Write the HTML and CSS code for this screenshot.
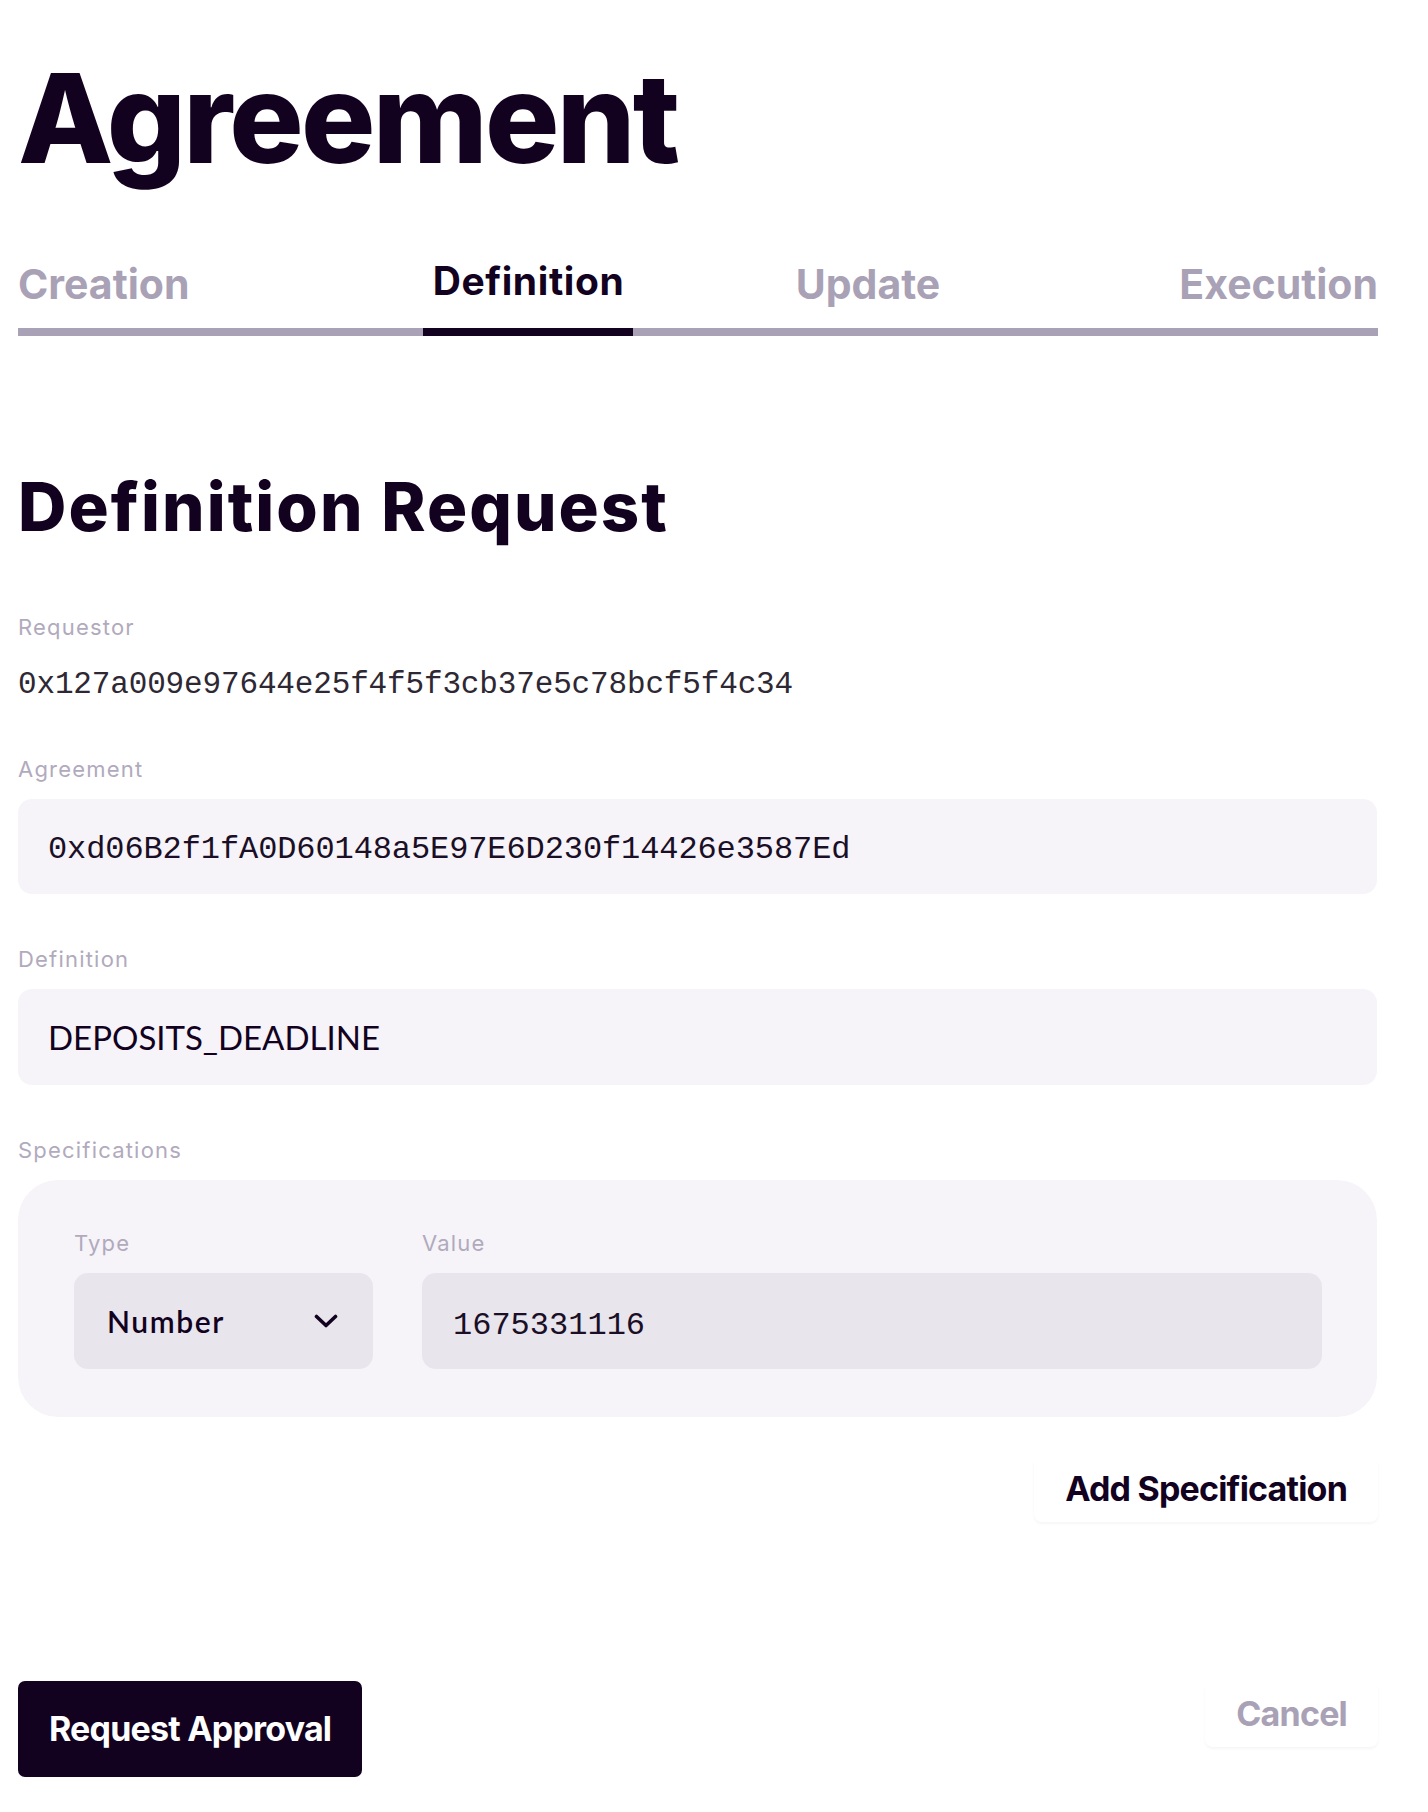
FILE: index.html
```html
<!DOCTYPE html>
<html lang="en">
<head>
<meta charset="utf-8">
<title>Agreement</title>
<link rel="stylesheet" href="styles.css">
</head>
<body>
<main class="page">
  <h1 class="title">Agreement</h1>

  <nav class="tabs">
    <div class="tab tab-first">Creation</div>
    <div class="tab tab-active">Definition</div>
    <div class="tab tab-mid">Update</div>
    <div class="tab tab-last">Execution</div>
  </nav>

  <h2 class="subtitle">Definition Request</h2>

  <section class="info">
    <div class="label">Requestor</div>
    <div class="address">0x127a009e97644e25f4f5f3cb37e5c78bcf5f4c34</div>
  </section>

  <section class="field">
    <div class="label">Agreement</div>
    <div class="box box-mono">0xd06B2f1fA0D60148a5E97E6D230f14426e3587Ed</div>
  </section>

  <section class="field">
    <div class="label">Definition</div>
    <div class="box box-text">DEPOSITS_DEADLINE</div>
  </section>

  <section class="field">
    <div class="label">Specifications</div>
    <div class="specs">
      <div class="spec-col spec-type">
        <div class="label">Type</div>
        <div class="select">
          <span class="select-text">Number</span>
          <svg class="chevron" width="24" height="14" viewBox="0 0 24 14" aria-hidden="true">
            <polyline points="2.5,2.5 12,11.5 21.5,2.5" fill="none" stroke="#12021f" stroke-width="3.6" stroke-linecap="round" stroke-linejoin="round"/>
          </svg>
        </div>
      </div>
      <div class="spec-col spec-value">
        <div class="label">Value</div>
        <div class="value-box">1675331116</div>
      </div>
    </div>
  </section>

  <div class="add-row">
    <button class="btn-ghost btn-add">Add Specification</button>
  </div>

  <div class="actions">
    <button class="btn-primary">Request Approval</button>
    <button class="btn-ghost btn-cancel">Cancel</button>
  </div>
</main>
</body>
</html>
```

FILE: styles.css
```css
* { box-sizing: border-box; }

html, body {
  margin: 0;
  padding: 0;
  background: #ffffff;
}

body {
  font-family: "Inter", "Lato", sans-serif;
  color: #12021f;
}

.page {
  width: 1360px;
  margin-left: 18px;
  padding-top: 56px;
  padding-bottom: 34px;
}

.title {
  margin: 0;
  font-size: 124px;
  line-height: 1;
  font-weight: 800;
  letter-spacing: -2.7px;
}

.tabs {
  margin-top: 81px;
  display: grid;
  grid-template-columns: repeat(4, 1fr);
  align-items: end;
  border-bottom: 8px solid #a9a1b5;
}

.tab {
  font-size: 41px;
  line-height: 1;
  font-weight: 700;
  color: #a9a1b5;
  padding-bottom: 23px;
}

.tab-first { justify-self: start; }
.tab-mid { justify-self: center; }
.tab-last { justify-self: end; }

.tab-active {
  justify-self: center;
  color: #12021f;
  font-size: 39px;
  letter-spacing: 0.6px;
  padding: 0 9px 28px 10px;
  border-bottom: 8px solid #12021f;
  margin-bottom: -8px;
}

.subtitle {
  margin: 137px 0 0;
  font-size: 67px;
  line-height: 1;
  font-weight: 800;
  letter-spacing: 2.05px;
}

.label {
  font-size: 22px;
  line-height: 1;
  font-weight: 400;
  letter-spacing: 1.2px;
  color: #b1aabd;
  margin-bottom: 19px;
}

.info {
  margin-top: 76px;
}

.info .label {
  margin-bottom: 31px;
}

.address {
  font-family: "Liberation Mono", "DejaVu Sans Mono", monospace;
  font-size: 31px;
  line-height: 1;
  letter-spacing: -0.15px;
  color: #2d2833;
}

.field {
  margin-top: 58px;
}

.field + .field {
  margin-top: 54px;
}

.box {
  width: 1359px;
  height: 95px;
  background: #f6f4f9;
  border-radius: 14px;
  padding-left: 30px;
  line-height: 1;
}

.box-mono {
  height: 95px;
  padding-top: 35px;
  font-family: "Liberation Mono", "DejaVu Sans Mono", monospace;
  font-size: 32px;
  letter-spacing: -0.1px;
  color: #1a0f26;
}

.box-text {
  height: 96px;
  padding-top: 32px;
  font-family: "Lato", "Inter", sans-serif;
  font-size: 33px;
  font-weight: 400;
}

.specs {
  width: 1359px;
  background: #f6f4f9;
  border-radius: 40px;
  padding: 52px 55px 48px 56px;
  display: flex;
  gap: 49px;
}

.spec-type {
  width: 299px;
  flex: none;
}

.spec-value {
  flex: 1;
}

.select {
  height: 96px;
  background: #e8e5ed;
  border-radius: 14px;
  display: flex;
  align-items: center;
  justify-content: space-between;
  padding: 0 35px 0 33px;
}

.select-text {
  font-family: "Lato", "Inter", sans-serif;
  font-size: 30px;
  line-height: 1;
  font-weight: 600;
  letter-spacing: 1.6px;
}

.chevron {
  display: block;
}

.value-box {
  height: 96px;
  background: #e8e5ed;
  border-radius: 14px;
  padding: 37px 0 0 31px;
  font-family: "Liberation Mono", "DejaVu Sans Mono", monospace;
  font-size: 32px;
  line-height: 1;
  color: #1a0f26;
}

button {
  font-family: "Inter", "Lato", sans-serif;
  border: none;
  cursor: pointer;
  margin: 0;
}

.add-row {
  margin-top: 39px;
  display: flex;
  justify-content: flex-end;
  width: 1360px;
}

.btn-ghost {
  background: #ffffff;
  height: 66px;
  padding: 0 31px;
  border-radius: 8px;
  font-size: 34px;
  font-weight: 700;
  line-height: 1;
  letter-spacing: -0.8px;
  box-shadow: 0 2px 3px rgba(40, 20, 60, 0.04);
}

.btn-add {
  color: #12021f;
}

.btn-cancel {
  color: #a9a1b5;
}

.actions {
  margin-top: 159px;
  display: flex;
  justify-content: space-between;
  align-items: flex-start;
  width: 1360px;
}

.btn-primary {
  background: #12021f;
  color: #ffffff;
  height: 96px;
  padding: 0 31px 0 31px;
  border-radius: 7px;
  font-size: 34px;
  font-weight: 700;
  line-height: 1;
  letter-spacing: -0.8px;
}
```
